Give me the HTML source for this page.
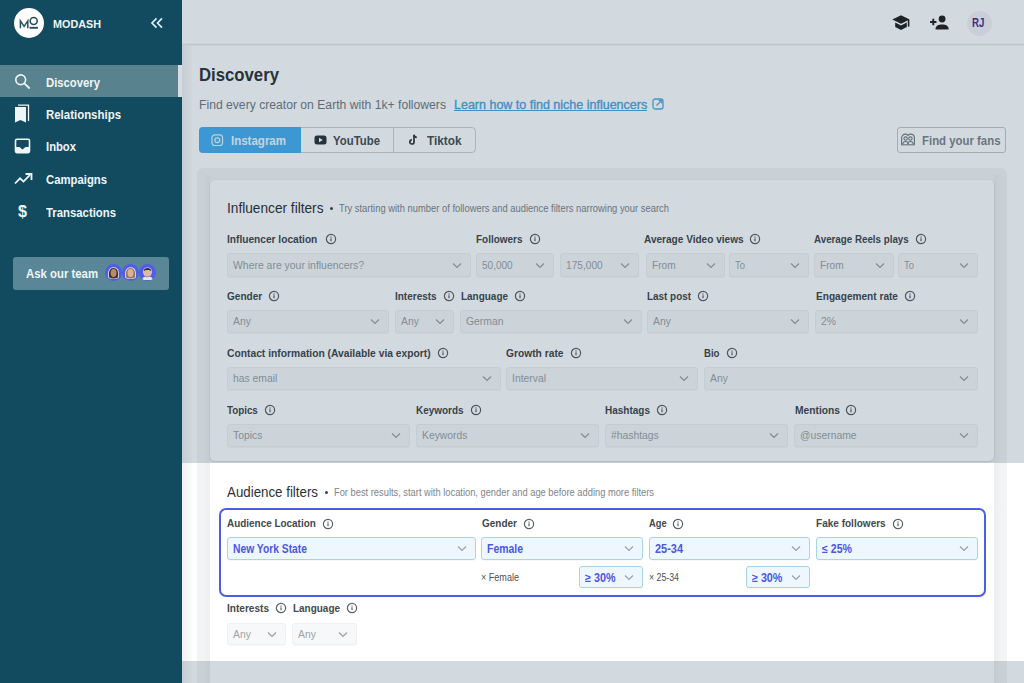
<!DOCTYPE html><html><head><meta charset="utf-8"><style>html,body{margin:0;padding:0;width:1024px;height:683px;overflow:hidden;background:#fff;}body{position:relative;font-family:"Liberation Sans",sans-serif;}</style></head><body><div style="position:absolute;left:182px;top:0px;width:842px;height:683px;background:#ffffff"></div><div style="position:absolute;left:182px;top:43px;width:842px;height:1px;background:#f7f8f8"></div><div style="position:absolute;left:182px;top:44px;width:842px;height:1px;background:#e8eaea"></div><div style="position:absolute;left:182px;top:45px;width:842px;height:1px;background:#f1f2f2"></div><div style="position:absolute;left:182px;top:46px;width:10px;height:637px;background:linear-gradient(90deg,#eef0f1,#f4f5f6 40%,#fbfbfc)"></div><div style="position:absolute;left:199px;top:65.51px;font-size:18px;line-height:18px;font-weight:700;color:#30353a;white-space:pre;transform:scaleX(0.9296);transform-origin:0 0;">Discovery</div><div style="position:absolute;left:199px;top:99.09px;font-size:12.5px;line-height:12.5px;font-weight:400;color:#737b82;white-space:pre;transform:scaleX(0.9727);transform-origin:0 0;">Find every creator on Earth with 1k+ followers</div><div style="position:absolute;left:454px;top:99.09px;font-size:12.5px;line-height:12.5px;font-weight:400;color:#4aa8e4;white-space:pre;-webkit-text-stroke:0.35px #4aa8e4;text-decoration:underline;text-decoration-thickness:1px;text-underline-offset:1px;">Learn how to find niche influencers</div><svg style="position:absolute;left:652px;top:98px" width="12" height="12" viewBox="0 0 12 12"><rect x="1" y="1" width="10" height="10" rx="2" fill="none" stroke="#55ade6" stroke-width="1.3"/><path d="M4.5 7.5L9.5 2.5M6.5 2.3h3.2v3.2" fill="none" stroke="#55ade6" stroke-width="1.3"/></svg><div style="position:absolute;left:198.5px;top:127px;width:277.0px;height:25.5px;box-sizing:border-box;border:1px solid #cdd2d5;border-radius:4px;background:#fff"></div><div style="position:absolute;left:198.5px;top:127px;width:102.0px;height:25.5px;background:#4aaff0;border-radius:4px 0 0 4px"></div><div style="position:absolute;left:393px;top:128px;width:1px;height:24px;background:#cdd2d5"></div><svg style="position:absolute;left:211.3px;top:133.6px" width="12.5" height="12.5" viewBox="0 0 13 13"><rect x="1" y="1" width="11" height="11" rx="3" fill="none" stroke="#e6f4fd" stroke-width="1.3"/><circle cx="6.5" cy="6.5" r="2.5" fill="none" stroke="#e6f4fd" stroke-width="1.3"/></svg><div style="position:absolute;left:231.4px;top:133.65px;font-size:13px;line-height:13px;font-weight:700;color:#eef7fd;white-space:pre;transform:scaleX(0.8851);transform-origin:0 0;">Instagram</div><svg style="position:absolute;left:314px;top:135px" width="13" height="10" viewBox="0 0 13 10"><rect x="0.5" y="0.5" width="12" height="9" rx="2.5" fill="#2f3438"/><path d="M5 2.8v4.4L8.8 5z" fill="#fff"/></svg><div style="position:absolute;left:333.3px;top:133.95px;font-size:13px;line-height:13px;font-weight:700;color:#4a5055;white-space:pre;transform:scaleX(0.8754);transform-origin:0 0;">YouTube</div><svg style="position:absolute;left:409px;top:134px" width="10" height="11" viewBox="0 0 10 11"><path d="M5 .8v7.1a2.1 2.1 0 1 1-2.1-2.1" fill="none" stroke="#33383c" stroke-width="1.7"/><path d="M5 1c.3 1.4 1.3 2.3 2.8 2.4" fill="none" stroke="#33383c" stroke-width="1.6"/></svg><div style="position:absolute;left:427.2px;top:133.95px;font-size:13px;line-height:13px;font-weight:700;color:#4a5055;white-space:pre;transform:scaleX(0.9064);transform-origin:0 0;">Tiktok</div><div style="position:absolute;left:897px;top:127px;width:109px;height:26px;box-sizing:border-box;border:1px solid #c3c9cd;border-radius:3px;background:#fff"></div><svg style="position:absolute;left:900px;top:133px" width="16" height="13" viewBox="0 0 16 13"><path d="M1.6 11.6V5.2C1.6 2.8 3.2 1.2 5.3 1.2c1.3 0 2.1.5 2.7 1.2.6-.7 1.4-1.2 2.7-1.2 2.1 0 3.7 1.6 3.7 4v6.4" fill="none" stroke="#7a8186" stroke-width="1.2"/><circle cx="5.6" cy="5.6" r="1.7" fill="none" stroke="#7a8186" stroke-width="1.1"/><circle cx="10.4" cy="5.6" r="1.7" fill="none" stroke="#7a8186" stroke-width="1.1"/><path d="M2.6 11.4c.4-2 1.6-2.9 3-2.9s2.6.9 3 2.9M7.4 11.4c.4-2 1.6-2.9 3-2.9s2.6.9 3 2.9" fill="none" stroke="#7a8186" stroke-width="1.1"/><path d="M1 11.8h14" stroke="#7a8186" stroke-width="1.1"/></svg><div style="position:absolute;left:921.5px;top:133.95px;font-size:13px;line-height:13px;font-weight:700;color:#80878c;white-space:pre;transform:scaleX(0.8765);transform-origin:0 0;">Find your fans</div><div style="position:absolute;left:197px;top:168px;width:810px;height:552px;background:#f3f4f5;border-radius:6px"></div><div style="position:absolute;left:994px;top:175px;width:8px;height:545px;background:linear-gradient(90deg,#eceeef,#f3f4f5)"></div><div style="position:absolute;left:203px;top:175px;width:7px;height:545px;background:linear-gradient(90deg,#f3f4f5,#eeeff0)"></div><div style="position:absolute;left:210px;top:180px;width:784px;height:281px;background:#fff;border-radius:5px;box-shadow:0 1px 2px rgba(0,0,0,0.10),0 0 0 1px rgba(0,0,0,0.02)"></div><div style="position:absolute;left:210px;top:463px;width:784px;height:257px;background:#fff"></div><div style="position:absolute;left:227px;top:201.16px;font-size:14px;line-height:14px;font-weight:400;color:#2d3237;white-space:pre;transform:scaleX(0.9764);transform-origin:0 0;">Influencer filters</div><div style="position:absolute;left:330px;top:207px;width:3px;height:3px;border-radius:50%;background:#3d4349"></div><div style="position:absolute;left:338.8px;top:204.12px;font-size:10px;line-height:10px;font-weight:400;color:#7d858b;white-space:pre;transform:scaleX(0.9389);transform-origin:0 0;">Try starting with number of followers and audience filters narrowing your search</div><div style="position:absolute;left:227px;top:233.88px;font-size:11.5px;line-height:11.5px;font-weight:700;color:#43494e;white-space:pre;transform:scaleX(0.8831);transform-origin:0 0;">Influencer location</div><svg style="position:absolute;left:324.5px;top:233.0px" width="12" height="12" viewBox="0 0 12 12"><circle cx="6" cy="6" r="4.6" fill="none" stroke="#5a6167" stroke-width="1.2"/><rect x="5.4" y="5.3" width="1.2" height="2.9" fill="#5a6167"/><rect x="5.4" y="3.5" width="1.2" height="1.1" fill="#5a6167"/></svg><div style="position:absolute;left:476.3px;top:233.88px;font-size:11.5px;line-height:11.5px;font-weight:700;color:#43494e;white-space:pre;transform:scaleX(0.8661);transform-origin:0 0;">Followers</div><svg style="position:absolute;left:528.7px;top:233.0px" width="12" height="12" viewBox="0 0 12 12"><circle cx="6" cy="6" r="4.6" fill="none" stroke="#5a6167" stroke-width="1.2"/><rect x="5.4" y="5.3" width="1.2" height="2.9" fill="#5a6167"/><rect x="5.4" y="3.5" width="1.2" height="1.1" fill="#5a6167"/></svg><div style="position:absolute;left:644.4px;top:233.88px;font-size:11.5px;line-height:11.5px;font-weight:700;color:#43494e;white-space:pre;transform:scaleX(0.8752);transform-origin:0 0;">Average Video views</div><svg style="position:absolute;left:749.1px;top:233.0px" width="12" height="12" viewBox="0 0 12 12"><circle cx="6" cy="6" r="4.6" fill="none" stroke="#5a6167" stroke-width="1.2"/><rect x="5.4" y="5.3" width="1.2" height="2.9" fill="#5a6167"/><rect x="5.4" y="3.5" width="1.2" height="1.1" fill="#5a6167"/></svg><div style="position:absolute;left:814.3px;top:233.88px;font-size:11.5px;line-height:11.5px;font-weight:700;color:#43494e;white-space:pre;transform:scaleX(0.8497);transform-origin:0 0;">Average Reels plays</div><svg style="position:absolute;left:915.3px;top:233.0px" width="12" height="12" viewBox="0 0 12 12"><circle cx="6" cy="6" r="4.6" fill="none" stroke="#5a6167" stroke-width="1.2"/><rect x="5.4" y="5.3" width="1.2" height="2.9" fill="#5a6167"/><rect x="5.4" y="3.5" width="1.2" height="1.1" fill="#5a6167"/></svg><div style="position:absolute;left:227px;top:253px;width:244px;height:24px;box-sizing:border-box;background:#f7f8f9;border:1px solid #eef0f2;border-radius:3px;box-shadow:0 1px 1px rgba(0,0,0,0.03)"></div><div style="position:absolute;left:233px;top:259.98px;font-size:11.5px;line-height:11.5px;font-weight:400;color:#9da3a7;white-space:pre;transform:scaleX(0.9068);transform-origin:0 0;">Where are your influencers?</div><svg style="position:absolute;left:452px;top:261.5px" width="10" height="7" viewBox="0 0 10 7"><path d="M1 1.5l4 4 4-4" fill="none" stroke="#9ba1a5" stroke-width="1.15"/></svg><div style="position:absolute;left:476px;top:253px;width:78px;height:24px;box-sizing:border-box;background:#f7f8f9;border:1px solid #eef0f2;border-radius:3px;box-shadow:0 1px 1px rgba(0,0,0,0.03)"></div><div style="position:absolute;left:482px;top:259.98px;font-size:11.5px;line-height:11.5px;font-weight:400;color:#9da3a7;white-space:pre;transform:scaleX(0.8725);transform-origin:0 0;">50,000</div><svg style="position:absolute;left:535px;top:261.5px" width="10" height="7" viewBox="0 0 10 7"><path d="M1 1.5l4 4 4-4" fill="none" stroke="#9ba1a5" stroke-width="1.15"/></svg><div style="position:absolute;left:560px;top:253px;width:79px;height:24px;box-sizing:border-box;background:#f7f8f9;border:1px solid #eef0f2;border-radius:3px;box-shadow:0 1px 1px rgba(0,0,0,0.03)"></div><div style="position:absolute;left:566px;top:259.98px;font-size:11.5px;line-height:11.5px;font-weight:400;color:#9da3a7;white-space:pre;transform:scaleX(0.8827);transform-origin:0 0;">175,000</div><svg style="position:absolute;left:620px;top:261.5px" width="10" height="7" viewBox="0 0 10 7"><path d="M1 1.5l4 4 4-4" fill="none" stroke="#9ba1a5" stroke-width="1.15"/></svg><div style="position:absolute;left:646px;top:253px;width:79px;height:24px;box-sizing:border-box;background:#f7f8f9;border:1px solid #eef0f2;border-radius:3px;box-shadow:0 1px 1px rgba(0,0,0,0.03)"></div><div style="position:absolute;left:652px;top:259.98px;font-size:11.5px;line-height:11.5px;font-weight:400;color:#9da3a7;white-space:pre;transform:scaleX(0.8829);transform-origin:0 0;">From</div><svg style="position:absolute;left:706px;top:261.5px" width="10" height="7" viewBox="0 0 10 7"><path d="M1 1.5l4 4 4-4" fill="none" stroke="#9ba1a5" stroke-width="1.15"/></svg><div style="position:absolute;left:729px;top:253px;width:80px;height:24px;box-sizing:border-box;background:#f7f8f9;border:1px solid #eef0f2;border-radius:3px;box-shadow:0 1px 1px rgba(0,0,0,0.03)"></div><div style="position:absolute;left:735px;top:259.98px;font-size:11.5px;line-height:11.5px;font-weight:400;color:#9da3a7;white-space:pre;transform:scaleX(0.8226);transform-origin:0 0;">To</div><svg style="position:absolute;left:790px;top:261.5px" width="10" height="7" viewBox="0 0 10 7"><path d="M1 1.5l4 4 4-4" fill="none" stroke="#9ba1a5" stroke-width="1.15"/></svg><div style="position:absolute;left:814px;top:253px;width:80px;height:24px;box-sizing:border-box;background:#f7f8f9;border:1px solid #eef0f2;border-radius:3px;box-shadow:0 1px 1px rgba(0,0,0,0.03)"></div><div style="position:absolute;left:820px;top:259.98px;font-size:11.5px;line-height:11.5px;font-weight:400;color:#9da3a7;white-space:pre;transform:scaleX(0.8829);transform-origin:0 0;">From</div><svg style="position:absolute;left:875px;top:261.5px" width="10" height="7" viewBox="0 0 10 7"><path d="M1 1.5l4 4 4-4" fill="none" stroke="#9ba1a5" stroke-width="1.15"/></svg><div style="position:absolute;left:898px;top:253px;width:80px;height:24px;box-sizing:border-box;background:#f7f8f9;border:1px solid #eef0f2;border-radius:3px;box-shadow:0 1px 1px rgba(0,0,0,0.03)"></div><div style="position:absolute;left:904px;top:259.98px;font-size:11.5px;line-height:11.5px;font-weight:400;color:#9da3a7;white-space:pre;transform:scaleX(0.8226);transform-origin:0 0;">To</div><svg style="position:absolute;left:959px;top:261.5px" width="10" height="7" viewBox="0 0 10 7"><path d="M1 1.5l4 4 4-4" fill="none" stroke="#9ba1a5" stroke-width="1.15"/></svg><div style="position:absolute;left:227.3px;top:290.88px;font-size:11.5px;line-height:11.5px;font-weight:700;color:#43494e;white-space:pre;transform:scaleX(0.8742);transform-origin:0 0;">Gender</div><svg style="position:absolute;left:267.6px;top:290.0px" width="12" height="12" viewBox="0 0 12 12"><circle cx="6" cy="6" r="4.6" fill="none" stroke="#5a6167" stroke-width="1.2"/><rect x="5.4" y="5.3" width="1.2" height="2.9" fill="#5a6167"/><rect x="5.4" y="3.5" width="1.2" height="1.1" fill="#5a6167"/></svg><div style="position:absolute;left:395.2px;top:290.88px;font-size:11.5px;line-height:11.5px;font-weight:700;color:#43494e;white-space:pre;transform:scaleX(0.8678);transform-origin:0 0;">Interests</div><svg style="position:absolute;left:443.1px;top:290.0px" width="12" height="12" viewBox="0 0 12 12"><circle cx="6" cy="6" r="4.6" fill="none" stroke="#5a6167" stroke-width="1.2"/><rect x="5.4" y="5.3" width="1.2" height="2.9" fill="#5a6167"/><rect x="5.4" y="3.5" width="1.2" height="1.1" fill="#5a6167"/></svg><div style="position:absolute;left:460.8px;top:290.88px;font-size:11.5px;line-height:11.5px;font-weight:700;color:#43494e;white-space:pre;transform:scaleX(0.8654);transform-origin:0 0;">Language</div><svg style="position:absolute;left:513.5px;top:290.0px" width="12" height="12" viewBox="0 0 12 12"><circle cx="6" cy="6" r="4.6" fill="none" stroke="#5a6167" stroke-width="1.2"/><rect x="5.4" y="5.3" width="1.2" height="2.9" fill="#5a6167"/><rect x="5.4" y="3.5" width="1.2" height="1.1" fill="#5a6167"/></svg><div style="position:absolute;left:647.3px;top:290.88px;font-size:11.5px;line-height:11.5px;font-weight:700;color:#43494e;white-space:pre;transform:scaleX(0.8606);transform-origin:0 0;">Last post</div><svg style="position:absolute;left:697px;top:290.0px" width="12" height="12" viewBox="0 0 12 12"><circle cx="6" cy="6" r="4.6" fill="none" stroke="#5a6167" stroke-width="1.2"/><rect x="5.4" y="5.3" width="1.2" height="2.9" fill="#5a6167"/><rect x="5.4" y="3.5" width="1.2" height="1.1" fill="#5a6167"/></svg><div style="position:absolute;left:815.8px;top:290.88px;font-size:11.5px;line-height:11.5px;font-weight:700;color:#43494e;white-space:pre;transform:scaleX(0.8788);transform-origin:0 0;">Engagement rate</div><svg style="position:absolute;left:904.1px;top:290.0px" width="12" height="12" viewBox="0 0 12 12"><circle cx="6" cy="6" r="4.6" fill="none" stroke="#5a6167" stroke-width="1.2"/><rect x="5.4" y="5.3" width="1.2" height="2.9" fill="#5a6167"/><rect x="5.4" y="3.5" width="1.2" height="1.1" fill="#5a6167"/></svg><div style="position:absolute;left:227px;top:310px;width:162px;height:23px;box-sizing:border-box;background:#f7f8f9;border:1px solid #eef0f2;border-radius:3px;box-shadow:0 1px 1px rgba(0,0,0,0.03)"></div><div style="position:absolute;left:233px;top:316.48px;font-size:11.5px;line-height:11.5px;font-weight:400;color:#9da3a7;white-space:pre;transform:scaleX(0.9000);transform-origin:0 0;">Any</div><svg style="position:absolute;left:370px;top:318.0px" width="10" height="7" viewBox="0 0 10 7"><path d="M1 1.5l4 4 4-4" fill="none" stroke="#9ba1a5" stroke-width="1.15"/></svg><div style="position:absolute;left:395px;top:310px;width:59px;height:23px;box-sizing:border-box;background:#f7f8f9;border:1px solid #eef0f2;border-radius:3px;box-shadow:0 1px 1px rgba(0,0,0,0.03)"></div><div style="position:absolute;left:401px;top:316.48px;font-size:11.5px;line-height:11.5px;font-weight:400;color:#9da3a7;white-space:pre;transform:scaleX(0.9000);transform-origin:0 0;">Any</div><svg style="position:absolute;left:435px;top:318.0px" width="10" height="7" viewBox="0 0 10 7"><path d="M1 1.5l4 4 4-4" fill="none" stroke="#9ba1a5" stroke-width="1.15"/></svg><div style="position:absolute;left:460px;top:310px;width:182px;height:23px;box-sizing:border-box;background:#f7f8f9;border:1px solid #eef0f2;border-radius:3px;box-shadow:0 1px 1px rgba(0,0,0,0.03)"></div><div style="position:absolute;left:466px;top:316.48px;font-size:11.5px;line-height:11.5px;font-weight:400;color:#9da3a7;white-space:pre;transform:scaleX(0.9000);transform-origin:0 0;">German</div><svg style="position:absolute;left:623px;top:318.0px" width="10" height="7" viewBox="0 0 10 7"><path d="M1 1.5l4 4 4-4" fill="none" stroke="#9ba1a5" stroke-width="1.15"/></svg><div style="position:absolute;left:647px;top:310px;width:162px;height:23px;box-sizing:border-box;background:#f7f8f9;border:1px solid #eef0f2;border-radius:3px;box-shadow:0 1px 1px rgba(0,0,0,0.03)"></div><div style="position:absolute;left:653px;top:316.48px;font-size:11.5px;line-height:11.5px;font-weight:400;color:#9da3a7;white-space:pre;transform:scaleX(0.9000);transform-origin:0 0;">Any</div><svg style="position:absolute;left:790px;top:318.0px" width="10" height="7" viewBox="0 0 10 7"><path d="M1 1.5l4 4 4-4" fill="none" stroke="#9ba1a5" stroke-width="1.15"/></svg><div style="position:absolute;left:815px;top:310px;width:163px;height:23px;box-sizing:border-box;background:#f7f8f9;border:1px solid #eef0f2;border-radius:3px;box-shadow:0 1px 1px rgba(0,0,0,0.03)"></div><div style="position:absolute;left:821px;top:316.48px;font-size:11.5px;line-height:11.5px;font-weight:400;color:#9da3a7;white-space:pre;transform:scaleX(0.9000);transform-origin:0 0;">2%</div><svg style="position:absolute;left:959px;top:318.0px" width="10" height="7" viewBox="0 0 10 7"><path d="M1 1.5l4 4 4-4" fill="none" stroke="#9ba1a5" stroke-width="1.15"/></svg><div style="position:absolute;left:227.3px;top:347.88px;font-size:11.5px;line-height:11.5px;font-weight:700;color:#43494e;white-space:pre;transform:scaleX(0.8946);transform-origin:0 0;">Contact information (Available via export)</div><svg style="position:absolute;left:436.7px;top:347.0px" width="12" height="12" viewBox="0 0 12 12"><circle cx="6" cy="6" r="4.6" fill="none" stroke="#5a6167" stroke-width="1.2"/><rect x="5.4" y="5.3" width="1.2" height="2.9" fill="#5a6167"/><rect x="5.4" y="3.5" width="1.2" height="1.1" fill="#5a6167"/></svg><div style="position:absolute;left:506.4px;top:347.88px;font-size:11.5px;line-height:11.5px;font-weight:700;color:#43494e;white-space:pre;transform:scaleX(0.8908);transform-origin:0 0;">Growth rate</div><svg style="position:absolute;left:570.2px;top:347.0px" width="12" height="12" viewBox="0 0 12 12"><circle cx="6" cy="6" r="4.6" fill="none" stroke="#5a6167" stroke-width="1.2"/><rect x="5.4" y="5.3" width="1.2" height="2.9" fill="#5a6167"/><rect x="5.4" y="3.5" width="1.2" height="1.1" fill="#5a6167"/></svg><div style="position:absolute;left:704.2px;top:347.88px;font-size:11.5px;line-height:11.5px;font-weight:700;color:#43494e;white-space:pre;transform:scaleX(0.8364);transform-origin:0 0;">Bio</div><svg style="position:absolute;left:725.5px;top:347.0px" width="12" height="12" viewBox="0 0 12 12"><circle cx="6" cy="6" r="4.6" fill="none" stroke="#5a6167" stroke-width="1.2"/><rect x="5.4" y="5.3" width="1.2" height="2.9" fill="#5a6167"/><rect x="5.4" y="3.5" width="1.2" height="1.1" fill="#5a6167"/></svg><div style="position:absolute;left:227px;top:367px;width:274px;height:23px;box-sizing:border-box;background:#f7f8f9;border:1px solid #eef0f2;border-radius:3px;box-shadow:0 1px 1px rgba(0,0,0,0.03)"></div><div style="position:absolute;left:233px;top:373.48px;font-size:11.5px;line-height:11.5px;font-weight:400;color:#9da3a7;white-space:pre;transform:scaleX(0.9000);transform-origin:0 0;">has email</div><svg style="position:absolute;left:482px;top:375.0px" width="10" height="7" viewBox="0 0 10 7"><path d="M1 1.5l4 4 4-4" fill="none" stroke="#9ba1a5" stroke-width="1.15"/></svg><div style="position:absolute;left:506px;top:367px;width:192px;height:23px;box-sizing:border-box;background:#f7f8f9;border:1px solid #eef0f2;border-radius:3px;box-shadow:0 1px 1px rgba(0,0,0,0.03)"></div><div style="position:absolute;left:512px;top:373.48px;font-size:11.5px;line-height:11.5px;font-weight:400;color:#9da3a7;white-space:pre;transform:scaleX(0.9000);transform-origin:0 0;">Interval</div><svg style="position:absolute;left:679px;top:375.0px" width="10" height="7" viewBox="0 0 10 7"><path d="M1 1.5l4 4 4-4" fill="none" stroke="#9ba1a5" stroke-width="1.15"/></svg><div style="position:absolute;left:704px;top:367px;width:274px;height:23px;box-sizing:border-box;background:#f7f8f9;border:1px solid #eef0f2;border-radius:3px;box-shadow:0 1px 1px rgba(0,0,0,0.03)"></div><div style="position:absolute;left:710px;top:373.48px;font-size:11.5px;line-height:11.5px;font-weight:400;color:#9da3a7;white-space:pre;transform:scaleX(0.9000);transform-origin:0 0;">Any</div><svg style="position:absolute;left:959px;top:375.0px" width="10" height="7" viewBox="0 0 10 7"><path d="M1 1.5l4 4 4-4" fill="none" stroke="#9ba1a5" stroke-width="1.15"/></svg><div style="position:absolute;left:227.3px;top:404.88px;font-size:11.5px;line-height:11.5px;font-weight:700;color:#43494e;white-space:pre;transform:scaleX(0.8504);transform-origin:0 0;">Topics</div><svg style="position:absolute;left:263.8px;top:404.0px" width="12" height="12" viewBox="0 0 12 12"><circle cx="6" cy="6" r="4.6" fill="none" stroke="#5a6167" stroke-width="1.2"/><rect x="5.4" y="5.3" width="1.2" height="2.9" fill="#5a6167"/><rect x="5.4" y="3.5" width="1.2" height="1.1" fill="#5a6167"/></svg><div style="position:absolute;left:416.3px;top:404.88px;font-size:11.5px;line-height:11.5px;font-weight:700;color:#43494e;white-space:pre;transform:scaleX(0.8641);transform-origin:0 0;">Keywords</div><svg style="position:absolute;left:469.8px;top:404.0px" width="12" height="12" viewBox="0 0 12 12"><circle cx="6" cy="6" r="4.6" fill="none" stroke="#5a6167" stroke-width="1.2"/><rect x="5.4" y="5.3" width="1.2" height="2.9" fill="#5a6167"/><rect x="5.4" y="3.5" width="1.2" height="1.1" fill="#5a6167"/></svg><div style="position:absolute;left:605.3px;top:404.88px;font-size:11.5px;line-height:11.5px;font-weight:700;color:#43494e;white-space:pre;transform:scaleX(0.8690);transform-origin:0 0;">Hashtags</div><svg style="position:absolute;left:655.5px;top:404.0px" width="12" height="12" viewBox="0 0 12 12"><circle cx="6" cy="6" r="4.6" fill="none" stroke="#5a6167" stroke-width="1.2"/><rect x="5.4" y="5.3" width="1.2" height="2.9" fill="#5a6167"/><rect x="5.4" y="3.5" width="1.2" height="1.1" fill="#5a6167"/></svg><div style="position:absolute;left:794.8px;top:404.88px;font-size:11.5px;line-height:11.5px;font-weight:700;color:#43494e;white-space:pre;transform:scaleX(0.8914);transform-origin:0 0;">Mentions</div><svg style="position:absolute;left:845.1px;top:404.0px" width="12" height="12" viewBox="0 0 12 12"><circle cx="6" cy="6" r="4.6" fill="none" stroke="#5a6167" stroke-width="1.2"/><rect x="5.4" y="5.3" width="1.2" height="2.9" fill="#5a6167"/><rect x="5.4" y="3.5" width="1.2" height="1.1" fill="#5a6167"/></svg><div style="position:absolute;left:227px;top:424px;width:183px;height:23px;box-sizing:border-box;background:#f7f8f9;border:1px solid #eef0f2;border-radius:3px;box-shadow:0 1px 1px rgba(0,0,0,0.03)"></div><div style="position:absolute;left:233px;top:430.48px;font-size:11.5px;line-height:11.5px;font-weight:400;color:#9da3a7;white-space:pre;transform:scaleX(0.9000);transform-origin:0 0;">Topics</div><svg style="position:absolute;left:391px;top:432.0px" width="10" height="7" viewBox="0 0 10 7"><path d="M1 1.5l4 4 4-4" fill="none" stroke="#9ba1a5" stroke-width="1.15"/></svg><div style="position:absolute;left:416px;top:424px;width:183px;height:23px;box-sizing:border-box;background:#f7f8f9;border:1px solid #eef0f2;border-radius:3px;box-shadow:0 1px 1px rgba(0,0,0,0.03)"></div><div style="position:absolute;left:422px;top:430.48px;font-size:11.5px;line-height:11.5px;font-weight:400;color:#9da3a7;white-space:pre;transform:scaleX(0.9000);transform-origin:0 0;">Keywords</div><svg style="position:absolute;left:580px;top:432.0px" width="10" height="7" viewBox="0 0 10 7"><path d="M1 1.5l4 4 4-4" fill="none" stroke="#9ba1a5" stroke-width="1.15"/></svg><div style="position:absolute;left:605px;top:424px;width:183px;height:23px;box-sizing:border-box;background:#f7f8f9;border:1px solid #eef0f2;border-radius:3px;box-shadow:0 1px 1px rgba(0,0,0,0.03)"></div><div style="position:absolute;left:611px;top:430.48px;font-size:11.5px;line-height:11.5px;font-weight:400;color:#9da3a7;white-space:pre;transform:scaleX(0.9000);transform-origin:0 0;">#hashtags</div><svg style="position:absolute;left:769px;top:432.0px" width="10" height="7" viewBox="0 0 10 7"><path d="M1 1.5l4 4 4-4" fill="none" stroke="#9ba1a5" stroke-width="1.15"/></svg><div style="position:absolute;left:794px;top:424px;width:184px;height:23px;box-sizing:border-box;background:#f7f8f9;border:1px solid #eef0f2;border-radius:3px;box-shadow:0 1px 1px rgba(0,0,0,0.03)"></div><div style="position:absolute;left:800px;top:430.48px;font-size:11.5px;line-height:11.5px;font-weight:400;color:#9da3a7;white-space:pre;transform:scaleX(0.9000);transform-origin:0 0;">@username</div><svg style="position:absolute;left:959px;top:432.0px" width="10" height="7" viewBox="0 0 10 7"><path d="M1 1.5l4 4 4-4" fill="none" stroke="#9ba1a5" stroke-width="1.15"/></svg><div style="position:absolute;left:227.3px;top:485.16px;font-size:14px;line-height:14px;font-weight:400;color:#2d3237;white-space:pre;transform:scaleX(0.9507);transform-origin:0 0;">Audience filters</div><div style="position:absolute;left:324.5px;top:491px;width:3px;height:3px;border-radius:50%;background:#3d4349"></div><div style="position:absolute;left:333.7px;top:488.12px;font-size:10px;line-height:10px;font-weight:400;color:#7d858b;white-space:pre;transform:scaleX(0.9315);transform-origin:0 0;">For best results, start with location, gender and age before adding more filters</div><div style="position:absolute;left:218.5px;top:508px;width:767.5px;height:88.5px;box-sizing:border-box;border:2.5px solid #4f5ce6;border-radius:7px"></div><div style="position:absolute;left:227.3px;top:518.38px;font-size:11.5px;line-height:11.5px;font-weight:700;color:#43494e;white-space:pre;transform:scaleX(0.8632);transform-origin:0 0;">Audience Location</div><svg style="position:absolute;left:322.4px;top:517.5px" width="12" height="12" viewBox="0 0 12 12"><circle cx="6" cy="6" r="4.6" fill="none" stroke="#5a6167" stroke-width="1.2"/><rect x="5.4" y="5.3" width="1.2" height="2.9" fill="#5a6167"/><rect x="5.4" y="3.5" width="1.2" height="1.1" fill="#5a6167"/></svg><div style="position:absolute;left:481.8px;top:518.38px;font-size:11.5px;line-height:11.5px;font-weight:700;color:#43494e;white-space:pre;transform:scaleX(0.8692);transform-origin:0 0;">Gender</div><svg style="position:absolute;left:522.6px;top:517.5px" width="12" height="12" viewBox="0 0 12 12"><circle cx="6" cy="6" r="4.6" fill="none" stroke="#5a6167" stroke-width="1.2"/><rect x="5.4" y="5.3" width="1.2" height="2.9" fill="#5a6167"/><rect x="5.4" y="3.5" width="1.2" height="1.1" fill="#5a6167"/></svg><div style="position:absolute;left:648.8px;top:518.38px;font-size:11.5px;line-height:11.5px;font-weight:700;color:#43494e;white-space:pre;transform:scaleX(0.8098);transform-origin:0 0;">Age</div><svg style="position:absolute;left:671.5px;top:517.5px" width="12" height="12" viewBox="0 0 12 12"><circle cx="6" cy="6" r="4.6" fill="none" stroke="#5a6167" stroke-width="1.2"/><rect x="5.4" y="5.3" width="1.2" height="2.9" fill="#5a6167"/><rect x="5.4" y="3.5" width="1.2" height="1.1" fill="#5a6167"/></svg><div style="position:absolute;left:816.4px;top:518.38px;font-size:11.5px;line-height:11.5px;font-weight:700;color:#43494e;white-space:pre;transform:scaleX(0.8724);transform-origin:0 0;">Fake followers</div><svg style="position:absolute;left:891.8px;top:517.5px" width="12" height="12" viewBox="0 0 12 12"><circle cx="6" cy="6" r="4.6" fill="none" stroke="#5a6167" stroke-width="1.2"/><rect x="5.4" y="5.3" width="1.2" height="2.9" fill="#5a6167"/><rect x="5.4" y="3.5" width="1.2" height="1.1" fill="#5a6167"/></svg><div style="position:absolute;left:227px;top:537px;width:249px;height:23px;box-sizing:border-box;background:#eef7fd;border:1px solid #a8d3ee;border-radius:3px;box-shadow:0 1px 1px rgba(0,0,0,0.03)"></div><div style="position:absolute;left:233px;top:543.24px;font-size:12px;line-height:12px;font-weight:700;color:#4a57e3;white-space:pre;transform:scaleX(0.8578);transform-origin:0 0;">New York State</div><svg style="position:absolute;left:457px;top:545.0px" width="10" height="7" viewBox="0 0 10 7"><path d="M1 1.5l4 4 4-4" fill="none" stroke="#9ba1a5" stroke-width="1.15"/></svg><div style="position:absolute;left:481px;top:537px;width:162px;height:23px;box-sizing:border-box;background:#eef7fd;border:1px solid #a8d3ee;border-radius:3px;box-shadow:0 1px 1px rgba(0,0,0,0.03)"></div><div style="position:absolute;left:487px;top:543.24px;font-size:12px;line-height:12px;font-weight:700;color:#4a57e3;white-space:pre;transform:scaleX(0.8704);transform-origin:0 0;">Female</div><svg style="position:absolute;left:624px;top:545.0px" width="10" height="7" viewBox="0 0 10 7"><path d="M1 1.5l4 4 4-4" fill="none" stroke="#9ba1a5" stroke-width="1.15"/></svg><div style="position:absolute;left:649px;top:537px;width:161px;height:23px;box-sizing:border-box;background:#eef7fd;border:1px solid #a8d3ee;border-radius:3px;box-shadow:0 1px 1px rgba(0,0,0,0.03)"></div><div style="position:absolute;left:655px;top:543.24px;font-size:12px;line-height:12px;font-weight:700;color:#4a57e3;white-space:pre;transform:scaleX(0.9120);transform-origin:0 0;">25-34</div><svg style="position:absolute;left:791px;top:545.0px" width="10" height="7" viewBox="0 0 10 7"><path d="M1 1.5l4 4 4-4" fill="none" stroke="#9ba1a5" stroke-width="1.15"/></svg><div style="position:absolute;left:816px;top:537px;width:162px;height:23px;box-sizing:border-box;background:#eef7fd;border:1px solid #a8d3ee;border-radius:3px;box-shadow:0 1px 1px rgba(0,0,0,0.03)"></div><div style="position:absolute;left:822px;top:543.24px;font-size:12px;line-height:12px;font-weight:700;color:#4a57e3;white-space:pre;transform:scaleX(0.8840);transform-origin:0 0;">≤ 25%</div><svg style="position:absolute;left:959px;top:545.0px" width="10" height="7" viewBox="0 0 10 7"><path d="M1 1.5l4 4 4-4" fill="none" stroke="#9ba1a5" stroke-width="1.15"/></svg><div style="position:absolute;left:481px;top:571.87px;font-size:10.5px;line-height:10.5px;font-weight:400;color:#4a5056;white-space:pre;transform:scaleX(0.8624);transform-origin:0 0;">× Female</div><div style="position:absolute;left:648.9px;top:571.87px;font-size:10.5px;line-height:10.5px;font-weight:400;color:#4a5056;white-space:pre;transform:scaleX(0.8355);transform-origin:0 0;">× 25-34</div><div style="position:absolute;left:579px;top:566px;width:64px;height:22px;box-sizing:border-box;background:#eef7fd;border:1px solid #a8d3ee;border-radius:3px;box-shadow:0 1px 1px rgba(0,0,0,0.03)"></div><div style="position:absolute;left:585px;top:571.74px;font-size:12px;line-height:12px;font-weight:700;color:#4a57e3;white-space:pre;transform:scaleX(0.9017);transform-origin:0 0;">≥ 30%</div><svg style="position:absolute;left:624px;top:573.5px" width="10" height="7" viewBox="0 0 10 7"><path d="M1 1.5l4 4 4-4" fill="none" stroke="#9ba1a5" stroke-width="1.15"/></svg><div style="position:absolute;left:746px;top:566px;width:64px;height:22px;box-sizing:border-box;background:#eef7fd;border:1px solid #a8d3ee;border-radius:3px;box-shadow:0 1px 1px rgba(0,0,0,0.03)"></div><div style="position:absolute;left:752px;top:571.74px;font-size:12px;line-height:12px;font-weight:700;color:#4a57e3;white-space:pre;transform:scaleX(0.8958);transform-origin:0 0;">≥ 30%</div><svg style="position:absolute;left:791px;top:573.5px" width="10" height="7" viewBox="0 0 10 7"><path d="M1 1.5l4 4 4-4" fill="none" stroke="#9ba1a5" stroke-width="1.15"/></svg><div style="position:absolute;left:227px;top:602.88px;font-size:11.5px;line-height:11.5px;font-weight:700;color:#43494e;white-space:pre;transform:scaleX(0.8761);transform-origin:0 0;">Interests</div><svg style="position:absolute;left:275px;top:602.0px" width="12" height="12" viewBox="0 0 12 12"><circle cx="6" cy="6" r="4.6" fill="none" stroke="#5a6167" stroke-width="1.2"/><rect x="5.4" y="5.3" width="1.2" height="2.9" fill="#5a6167"/><rect x="5.4" y="3.5" width="1.2" height="1.1" fill="#5a6167"/></svg><div style="position:absolute;left:292.9px;top:602.88px;font-size:11.5px;line-height:11.5px;font-weight:700;color:#43494e;white-space:pre;transform:scaleX(0.8654);transform-origin:0 0;">Language</div><svg style="position:absolute;left:345.7px;top:602.0px" width="12" height="12" viewBox="0 0 12 12"><circle cx="6" cy="6" r="4.6" fill="none" stroke="#5a6167" stroke-width="1.2"/><rect x="5.4" y="5.3" width="1.2" height="2.9" fill="#5a6167"/><rect x="5.4" y="3.5" width="1.2" height="1.1" fill="#5a6167"/></svg><div style="position:absolute;left:227px;top:623px;width:59px;height:22px;box-sizing:border-box;background:#f7f8f9;border:1px solid #eef0f2;border-radius:3px;box-shadow:0 1px 1px rgba(0,0,0,0.03)"></div><div style="position:absolute;left:233px;top:628.98px;font-size:11.5px;line-height:11.5px;font-weight:400;color:#9da3a7;white-space:pre;transform:scaleX(0.9000);transform-origin:0 0;">Any</div><svg style="position:absolute;left:267px;top:630.5px" width="10" height="7" viewBox="0 0 10 7"><path d="M1 1.5l4 4 4-4" fill="none" stroke="#9ba1a5" stroke-width="1.15"/></svg><div style="position:absolute;left:292px;top:623px;width:65px;height:22px;box-sizing:border-box;background:#f7f8f9;border:1px solid #eef0f2;border-radius:3px;box-shadow:0 1px 1px rgba(0,0,0,0.03)"></div><div style="position:absolute;left:298px;top:628.98px;font-size:11.5px;line-height:11.5px;font-weight:400;color:#9da3a7;white-space:pre;transform:scaleX(0.9000);transform-origin:0 0;">Any</div><svg style="position:absolute;left:338px;top:630.5px" width="10" height="7" viewBox="0 0 10 7"><path d="M1 1.5l4 4 4-4" fill="none" stroke="#9ba1a5" stroke-width="1.15"/></svg><div style="position:absolute;left:182px;top:0px;width:842px;height:463px;background:rgba(0,40,70,0.172)"></div><div style="position:absolute;left:182px;top:661px;width:842px;height:22px;background:rgba(0,40,70,0.172)"></div><svg style="position:absolute;left:886px;top:8px" width="68" height="28" viewBox="0 0 68 28"><path d="M6.3 11.5L15 7.2l8.7 4.3L15 15.8z" fill="#1f2326"/><path d="M22.6 12v6.6" stroke="#1f2326" stroke-width="1.6"/><path d="M9.2 14.6l5.8 2.9 5.8-2.9v4.5L15 22 9.2 19.1z" fill="#1f2326"/><path d="M47.3 10.8v6.4M44.1 14h6.4" stroke="#1f2326" stroke-width="1.9"/><circle cx="56.1" cy="11" r="3.4" fill="#1f2326"/><path d="M49.5 21.3c0-3.4 3-4.8 6.6-4.8s6.6 1.4 6.6 4.8v.1h-13.2z" fill="#1f2326"/></svg><div style="position:absolute;left:966.5px;top:10.5px;width:25px;height:25px;border-radius:50%;background:#caced9"></div><div style="position:absolute;left:972px;top:17.34px;font-size:12.2px;line-height:12.2px;font-weight:700;color:#3b2c84;white-space:pre;transform:scaleX(0.7952);transform-origin:0 0;">RJ</div><div style="position:absolute;left:0px;top:0px;width:182px;height:683px;background:#124b60"></div><div style="position:absolute;left:13.8px;top:7.7px;width:30.4px;height:30.4px;border-radius:50%;background:#fff"></div><svg style="position:absolute;left:14px;top:8px" width="30" height="30" viewBox="0 0 30 30"><path d="M6.4 20.2V12.9l3.7 5.6 3.7-5.6v7.3" fill="none" stroke="#274f5e" stroke-width="1.5"/><circle cx="19.7" cy="13" r="3.5" fill="none" stroke="#274f5e" stroke-width="1.6"/><path d="M15.5 19.8h8.4" stroke="#274f5e" stroke-width="1.9"/></svg><div style="position:absolute;left:53px;top:18.58px;font-size:11.5px;line-height:11.5px;font-weight:700;color:#eef5f8;white-space:pre;transform:scaleX(0.9389);transform-origin:0 0;">MODASH</div><svg style="position:absolute;left:149.6px;top:17px" width="14" height="12" viewBox="0 0 14 12"><path d="M6.5 1.3L2 6l4.5 4.7M12 1.3L7.5 6l4.5 4.7" fill="none" stroke="#d8f0f6" stroke-width="1.7"/></svg><div style="position:absolute;left:0px;top:65px;width:178px;height:32px;background:#59828f"></div><div style="position:absolute;left:178px;top:65px;width:4px;height:32px;background:#d6dde2"></div><svg style="position:absolute;left:13px;top:72px" width="20" height="18" viewBox="0 0 20 18"><circle cx="7.7" cy="7.8" r="4.9" fill="none" stroke="#eef6f8" stroke-width="1.6"/><path d="M11.3 11.4l4.9 4.6" stroke="#eef6f8" stroke-width="1.8" stroke-linecap="round"/></svg><div style="position:absolute;left:46px;top:75.65px;font-size:13px;line-height:13px;font-weight:700;color:#eef6f8;white-space:pre;transform:scaleX(0.8688);transform-origin:0 0;">Discovery</div><svg style="position:absolute;left:14px;top:103px" width="18" height="22" viewBox="0 0 18 22"><path d="M4 2.2h10.5V18" fill="none" stroke="#eef6f8" stroke-width="1.3"/><path d="M1 4h11v15.5l-5.5-2.6L1 19.5z" fill="#eef6f8"/></svg><div style="position:absolute;left:46px;top:108.15px;font-size:13px;line-height:13px;font-weight:700;color:#eef6f8;white-space:pre;transform:scaleX(0.8798);transform-origin:0 0;">Relationships</div><svg style="position:absolute;left:14px;top:138px" width="17" height="16" viewBox="0 0 17 16"><rect x="1.5" y="1.2" width="14" height="13.4" rx="1.5" fill="none" stroke="#eef6f8" stroke-width="1.6"/><path d="M1.5 9h4l3 2.5 3-2.5h4v4.8a1 1 0 0 1-1 1h-12a1 1 0 0 1-1-1z" fill="#eef6f8"/></svg><div style="position:absolute;left:46px;top:140.45px;font-size:13px;line-height:13px;font-weight:700;color:#eef6f8;white-space:pre;transform:scaleX(0.8653);transform-origin:0 0;">Inbox</div><svg style="position:absolute;left:14px;top:173px" width="19" height="12" viewBox="0 0 19 12"><path d="M1 10.5l5-5.2 3.5 3.3 6.5-6.8" fill="none" stroke="#eef6f8" stroke-width="1.8"/><path d="M11.5 1h6v6" fill="none" stroke="#eef6f8" stroke-width="1.8"/></svg><div style="position:absolute;left:46px;top:173.45px;font-size:13px;line-height:13px;font-weight:700;color:#eef6f8;white-space:pre;transform:scaleX(0.8705);transform-origin:0 0;">Campaigns</div><div style="position:absolute;left:18px;top:204.48px;font-size:16px;line-height:16px;font-weight:700;color:#eef6f8;white-space:pre;transform:scaleX(1.0105);transform-origin:0 0;">$</div><div style="position:absolute;left:46px;top:205.75px;font-size:13px;line-height:13px;font-weight:700;color:#eef6f8;white-space:pre;transform:scaleX(0.8728);transform-origin:0 0;">Transactions</div><div style="position:absolute;left:13px;top:257px;width:156px;height:33px;background:#5a8797;border-radius:3px"></div><div style="position:absolute;left:25.5px;top:267.25px;font-size:13px;line-height:13px;font-weight:700;color:#eef6f8;white-space:pre;transform:scaleX(0.8741);transform-origin:0 0;">Ask our team</div><svg style="position:absolute;left:105.3px;top:264px" width="17" height="17" viewBox="0 0 17 17"><defs><clipPath id="c113"><circle cx="8.5" cy="8.5" r="8.5"/></clipPath></defs><circle cx="8.5" cy="8.5" r="8.5" fill="#4f5de9"/><g clip-path="url(#c113)"><path d="M3.2 13.5C2.6 9 3 3.5 8.5 3.2 14 3 14.3 9 13.8 13.5 12 15.5 5 15.5 3.2 13.5z" fill="#fff" opacity=".85"/><path d="M4 13.3C3.5 9 4 4 8.5 4s5.1 5 4.5 9.3C11.5 15 5.5 15 4 13.3z" fill="#4a3126"/><ellipse cx="8.6" cy="9" rx="2.9" ry="3.9" fill="#b98a6b"/></g></svg><svg style="position:absolute;left:122.1px;top:264px" width="17" height="17" viewBox="0 0 17 17"><defs><clipPath id="c130"><circle cx="8.5" cy="8.5" r="8.5"/></clipPath></defs><circle cx="8.5" cy="8.5" r="8.5" fill="#4f5de9"/><g clip-path="url(#c130)"><path d="M3.2 13.5C2.6 9 3 3.5 8.5 3.2 14 3 14.3 9 13.8 13.5 12 15.5 5 15.5 3.2 13.5z" fill="#fff" opacity=".85"/><path d="M4 13.3C3.5 9 4 4 8.5 4s5.1 5 4.5 9.3C11.5 15 5.5 15 4 13.3z" fill="#9b7658"/><ellipse cx="8.5" cy="9" rx="3" ry="3.9" fill="#d8b498"/></g></svg><svg style="position:absolute;left:139.1px;top:264px" width="17" height="17" viewBox="0 0 17 17"><defs><clipPath id="c147"><circle cx="8.5" cy="8.5" r="8.5"/></clipPath></defs><circle cx="8.5" cy="8.5" r="8.5" fill="#4f5de9"/><g clip-path="url(#c147)"><path d="M3 16c.3-2.5 2-3.6 5.5-3.6S13.7 13.5 14 16z" fill="#e9e6e4"/><path d="M4.2 8.2C4 4.8 6 3.4 8.5 3.4s4.6 1.4 4.3 4.8c-.3 2.8-1.8 4.7-4.3 4.7S4.4 11 4.2 8.2z" fill="#fff" opacity=".8"/><ellipse cx="8.5" cy="9" rx="3.5" ry="4" fill="#dcbba3"/><path d="M4.8 7.6C4.6 5 6.3 4 8.5 4s3.9 1 3.7 3.6c-.8-1.3-2.3-1.6-3.7-1.6s-2.9.3-3.7 1.6z" fill="#3b2a22"/><path d="M6.2 11.6c.8 1 1.5 1.3 2.3 1.3s1.5-.3 2.3-1.3" fill="none" stroke="#8a6a58" stroke-width=".7"/></g></svg></body></html>
